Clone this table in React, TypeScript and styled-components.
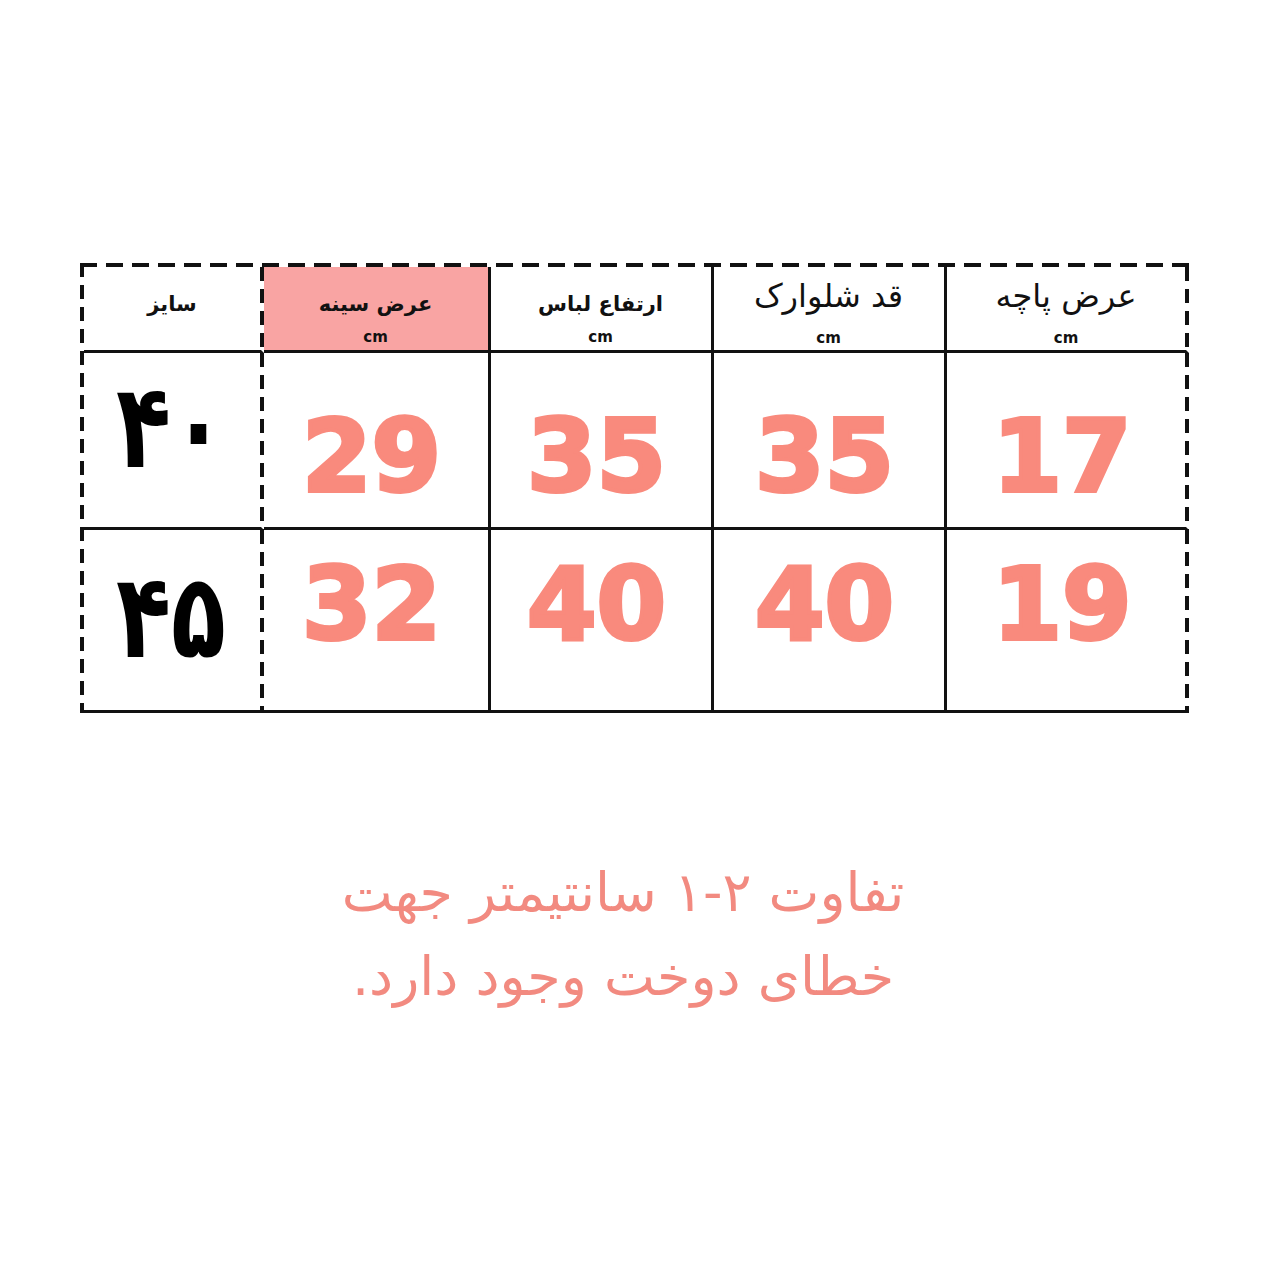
import React from 'react';
import styled, { createGlobalStyle, css } from 'styled-components';

const GlobalStyle = createGlobalStyle`
  html, body {
    margin: 0;
    padding: 0;
    background: #ffffff;
  }
  body {
    font-family: "DejaVu Sans", "Noto Sans", sans-serif;
  }
`;

const INK = '#111';
const hDash = `repeating-linear-gradient(to right, ${INK} 0 17px, transparent 17px 26px)`;
const vDash = `repeating-linear-gradient(to bottom, ${INK} 0 14px, transparent 14px 22px)`;

const columns = [
  { title: 'سایز', unit: false, big: false, pink: false },
  { title: 'عرض سینه', unit: true, big: false, pink: true },
  { title: 'ارتفاع لباس', unit: true, big: false, pink: false },
  { title: 'قد شلوارک', unit: true, big: true, pink: false },
  { title: 'عرض پاچه', unit: true, big: true, pink: false },
];

const rows = [
  { size: '۴۰', values: ['29', '35', '35', '17'], height: 177, shift: 17, sizeShift: -13 },
  { size: '۴۵', values: ['32', '40', '40', '19'], height: 183, shift: -15, sizeShift: -3 },
];

const App = () => {
  return (
    <Page>
      <GlobalStyle />
      <Table>
        {columns.map((col, i) => (
          <HeadCell key={col.title} $pink={col.pink} $dashed={i === 0 || i === 4}>
            <HeadTitle dir="rtl" $big={col.big}>
              {col.title}
            </HeadTitle>
            {col.unit && <Unit>cm</Unit>}
          </HeadCell>
        ))}
        {rows.map((row) => [
          <BodyCell key={row.size} $dashed $h={row.height}>
            <SizeLabel dir="rtl" $shift={row.sizeShift}>
              {row.size}
            </SizeLabel>
          </BodyCell>,
          ...row.values.map((v, j) => (
            <BodyCell key={row.size + j} $dashed={j === 3} $h={row.height}>
              <Value $shift={row.shift}>{v}</Value>
            </BodyCell>
          )),
        ])}
      </Table>
      <Note dir="rtl">
        <span>تفاوت ۲-۱ سانتیمتر جهت</span>
        <span>خطای دوخت وجود دارد.</span>
      </Note>
    </Page>
  );
};

const dashedRight = css`
  border-right: 3px solid transparent;
  background-image: ${vDash};
  background-position: right top;
  background-size: 4px 100%;
  background-repeat: no-repeat;
  background-origin: border-box;
`;

const Page = styled.main`
  width: 1280px;
  min-height: 1280px;
  display: flex;
  flex-direction: column;
  align-items: center;
  padding-top: 263px;
  box-sizing: border-box;
`;

const Table = styled.div`
  display: grid;
  grid-template-columns: 180px 227px 223px 233px 242px;
  grid-template-rows: 86px auto auto;
  margin-left: -12px;
  padding: 4px 0 0 4px;
  background:
    ${hDash} left top / 100% 4px no-repeat,
    ${vDash} left top / 4px 100% no-repeat;
`;

const HeadCell = styled.div<{ $pink: boolean; $dashed: boolean }>`
  box-sizing: border-box;
  display: flex;
  flex-direction: column;
  align-items: center;
  justify-content: flex-start;
  padding-top: 27px;
  background-color: ${(p) => (p.$pink ? '#f9a4a3' : '#ffffff')};
  border-right: 3px solid ${INK};
  border-bottom: 3px solid ${INK};
  ${(p) => p.$dashed && dashedRight}
`;

const HeadTitle = styled.div<{ $big: boolean }>`
  font-family: "DejaVu Sans", sans-serif;
  font-size: ${(p) => (p.$big ? '32px' : '21px')};
  font-weight: ${(p) => (p.$big ? 400 : 700)};
  color: ${INK};
  line-height: 1;
  height: 30px;
  margin-top: ${(p) => (p.$big ? '-14px' : '0')};
  margin-bottom: ${(p) => (p.$big ? '21px' : '6px')};
`;

const Unit = styled.div`
  font-family: "DejaVu Sans", sans-serif;
  font-size: 15px;
  font-weight: 700;
  color: ${INK};
  line-height: 1;
`;

const BodyCell = styled.div<{ $dashed: boolean; $h: number }>`
  box-sizing: border-box;
  height: ${(p) => p.$h}px;
  display: flex;
  align-items: center;
  justify-content: center;
  padding-right: 8px;
  border-right: 3px solid ${INK};
  border-bottom: 3px solid ${INK};
  ${(p) => p.$dashed && dashedRight}
`;

const SizeLabel = styled.div<{ $shift: number }>`
  font-family: "DejaVu Sans", sans-serif;
  font-size: 90px;
  font-weight: 700;
  color: #000;
  line-height: 1;
  margin-left: 6px;
  transform: translateY(${(p) => p.$shift}px) scaleY(1.3);
`;

const Value = styled.div<{ $shift: number }>`
  font-family: "DejaVu Sans", sans-serif;
  font-size: 100px;
  font-weight: 700;
  color: #f98a7d;
  line-height: 1;
  -webkit-text-stroke: 4px #f98a7d;
  transform: translateY(${(p) => p.$shift}px);
`;

const Note = styled.p`
  margin: 138px 0 0 -34px;
  display: flex;
  flex-direction: column;
  align-items: center;
  font-family: "DejaVu Sans", sans-serif;
  font-size: 54px;
  line-height: 84px;
  color: #f28a80;
`;

export default App;
